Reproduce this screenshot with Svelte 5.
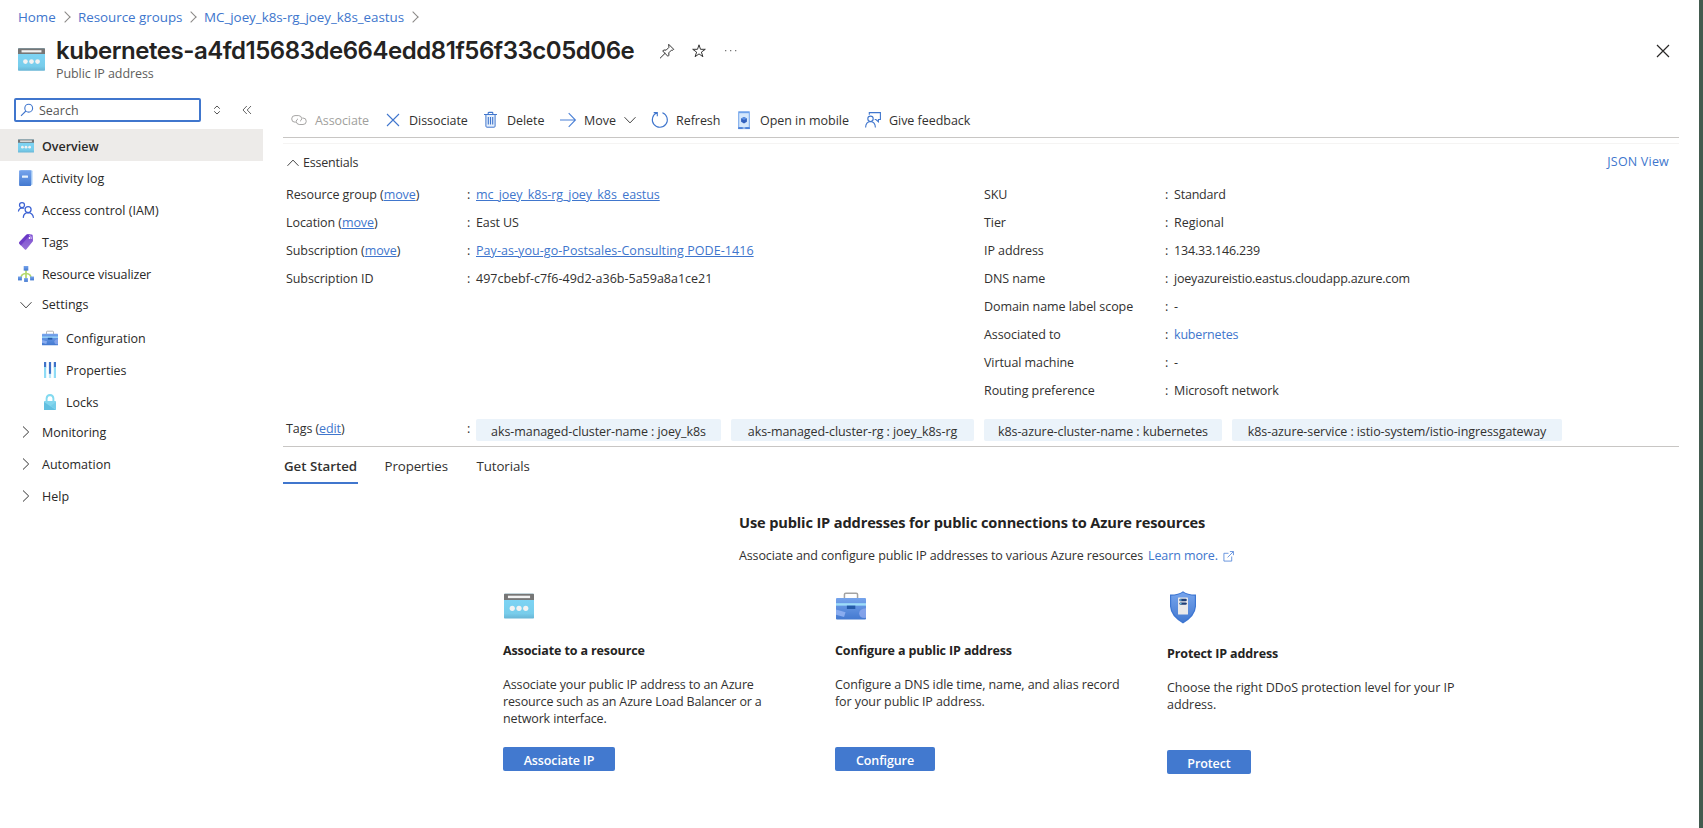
<script>
  const crumbs = [
    { text: 'Home', w: 60 },
    { text: 'Resource groups', w: 126 },
    { text: 'MC_joey_k8s-rg_joey_k8s_eastus', w: 222 },
  ];
  const nav = [
    { icon: 'ip', text: 'Overview', active: true },
    { icon: 'log', text: 'Activity log' },
    { icon: 'iam', text: 'Access control (IAM)' },
    { icon: 'tag', text: 'Tags' },
    { icon: 'visual', text: 'Resource visualizer', ls: -0.13 },
  ];
  const settings = [
    { icon: 'case', text: 'Configuration' },
    { icon: 'props', text: 'Properties' },
    { icon: 'lock', text: 'Locks' },
  ];
  const groups = ['Monitoring', 'Automation', 'Help'];
  const commands = [
    { icon: 'link', text: 'Associate', w: 94, disabled: true },
    { icon: 'x', text: 'Dissociate', w: 98 },
    { icon: 'trash', text: 'Delete', w: 77 },
    { icon: 'arrow', text: 'Move', w: 92, menu: true },
    { icon: 'refresh', text: 'Refresh', w: 84 },
    { icon: 'mobile', text: 'Open in mobile', w: 129 },
    { icon: 'feedback', text: 'Give feedback', w: 120 },
  ];
  const left = [
    { label: 'Resource group', action: 'move', value: 'mc_joey_k8s-rg_joey_k8s_eastus', link: 'u', ls: -0.08 },
    { label: 'Location', action: 'move', value: 'East US', ls: -0.1 },
    { label: 'Subscription', action: 'move', value: 'Pay-as-you-go-Postsales-Consulting PODE-1416', link: 'u', ls: 0.06 },
    { label: 'Subscription ID', value: '497cbebf-c7f6-49d2-a36b-5a59a8a1ce21', ls: 0 },
  ];
  const right = [
    { label: 'SKU', value: 'Standard', ls: -0.2 },
    { label: 'Tier', value: 'Regional', ls: 0 },
    { label: 'IP address', value: '134.33.146.239', ls: -0.18 },
    { label: 'DNS name', value: 'joeyazureistio.eastus.cloudapp.azure.com', ls: -0.2 },
    { label: 'Domain name label scope', value: '-' },
    { label: 'Associated to', value: 'kubernetes', link: 'p', ls: -0.18 },
    { label: 'Virtual machine', value: '-' },
    { label: 'Routing preference', value: 'Microsoft network', ls: -0.1 },
  ];
  const tags = [
    { text: 'aks-managed-cluster-name : joey_k8s', w: 245 },
    { text: 'aks-managed-cluster-rg : joey_k8s-rg', w: 243 },
    { text: 'k8s-azure-cluster-name : kubernetes', w: 238 },
    { text: 'k8s-azure-service : istio-system/istio-ingressgateway', w: 330 },
  ];
  const cards = [
    { icon: 'ip', title: 'Associate to a resource', lines: ['Associate your public IP address to an Azure', 'resource such as an Azure Load Balancer or a', 'network interface.'], button: 'Associate IP', w: 112, ls: -0.14 },
    { icon: 'case', title: 'Configure a public IP address', lines: ['Configure a DNS idle time, name, and alias record', 'for your public IP address.'], button: 'Configure', w: 100, ls: -0.09 },
    { icon: 'shield', title: 'Protect IP address', lines: ['Choose the right DDoS protection level for your IP', 'address.'], button: 'Protect', w: 84, low: true, ls: -0.05 },
  ];
</script>

{#snippet icon(name, size)}
  <svg class="icon" width={size} height={size} viewBox="0 0 16 16" fill="none">
    {#if name === 'ip'}
      <rect x="0" y="1.4" width="16" height="13.2" rx=".4" fill="url(#g-sky)" />
      <path d="M0 1.8q0-.4.4-.4h15.2q.4 0 .4.4v3H0z" fill="#767676" />
      <rect x="2.1" y="2.5" width="11.8" height="1.3" fill="#f2f2f2" />
      <circle cx="4.4" cy="9.2" r="1.4" fill="#f2f2f2" />
      <circle cx="8" cy="9.2" r="1.4" fill="#f2f2f2" />
      <circle cx="11.6" cy="9.2" r="1.4" fill="#f2f2f2" />
    {:else if name === 'log'}
      <path d="M3 .3h10.6q.9 0 .9.9v13q0 .8-.9.8H3z" fill="#a9cdf6" />
      <path d="M2 .3h10.4q.7 0 .7.8v14.1q0 .7-.7.7H2q-.9 0-.9-.9V1.2Q1.1.3 2 .3z" fill="url(#g-blue)" />
      <rect x="4" y="5.6" width="6" height="2.2" rx=".3" fill="#e6f1fd" />
    {:else if name === 'iam'}
      <g stroke="#3d63d3" stroke-width="1.25" stroke-linecap="round">
        <circle cx="4" cy="3.1" r="2.5" />
        <path d="M.5 9Q1 6.2 4 5.8q.9 0 1.7.4" />
        <circle cx="10.1" cy="7.6" r="3" />
        <path d="M5.3 15.4q.3-4.4 4.8-4.7 4.6.3 5.3 4.7" />
      </g>
    {:else if name === 'tag'}
      <path d="M8.300.8Q8.800.3 9.500.3l4.100.2q1 .1 1.100 1l.3 5q0 .7-.5 1.300l-6.300 7.600q-.6.7-1.300.1L1.300 9.700q-.6-.8.1-1.600z" fill="url(#g-purple)" />
      <path d="M8.300.8Q8.800.3 9.500.3l3 .1L2.800 11.400 1.300 9.700q-.6-.8.1-1.600z" fill="#5f2cc0" opacity=".65" />
      <circle cx="11.600" cy="4" r=".9" fill="#fff" />
      <path d="M11.200 1.300q2.700.5 2.300 3.700" stroke="#e3d3fa" stroke-width=".7" />
    {:else if name === 'visual'}
      <path d="M8 4v9M8 7.500q-5 .3-5 4.500M8 7.500q5 .3 5 4.500" stroke="#b3d96c" stroke-width="1.700" />
      <rect x="5.700" y="0" width="4.600" height="4.600" fill="url(#g-blue)" />
      <rect x="0" y="10.500" width="3.900" height="3.900" fill="url(#g-blue)" />
      <rect x="6.100" y="12.100" width="3.800" height="3.800" fill="url(#g-blue)" />
      <rect x="12.100" y="10.500" width="3.900" height="3.900" fill="url(#g-blue)" />
    {:else if name === 'case'}
      <path d="M4.500 4V1.900q0-.7.700-.7h5.600q.7 0 .7.700V4" stroke="#a3a3a3" stroke-width=".8" />
      <rect x="0" y="3.700" width="16" height="11.500" rx=".5" fill="url(#g-blue)" />
      <path d="M0 9.900 5.100 11.300 4.300 13.900 0 12.700z" fill="#8fb0f2" opacity=".9" />
      <path d="M16 9.200v5.100q-3.600.4-3.700-2.500.2-2.400 3.700-2.600z" fill="#8fa9ee" opacity=".8" />
      <rect x="0" y="6.500" width="16" height="1.300" fill="#9ddcf9" />
      <rect x="5.800" y="7.800" width="4.500" height="1.800" fill="#245aa8" />
    {:else if name === 'props'}
      <rect x="2" y="0" width="2.200" height="5.500" fill="#3f72c8" /><rect x="2" y="5" width="2.200" height="11" fill="#8fdcf6" />
      <rect x="6.900" y="0" width="2.200" height="12" fill="#3f72c8" /><rect x="6.900" y="11.800" width="2.200" height="4.200" fill="#b9e8f9" />
      <rect x="11.800" y="0" width="2.200" height="5.500" fill="#3f72c8" /><rect x="11.800" y="5" width="2.200" height="11" fill="#8fdcf6" />
    {:else if name === 'lock'}
      <path d="M4.600 7.500V4.400Q4.800 1.100 8 1q3.200.1 3.400 3.400v3.100" stroke="#83daf0" stroke-width="1.900" />
      <rect x="2" y="7" width="12" height="8.900" rx=".6" fill="#83d6ee" />
      <path d="M2 8l12 8H2.600q-.6 0-.6-.6z" fill="#62bfe0" />
      <path d="M14 8v7.300L8.500 12z" fill="#74cce9" />
    {:else if name === 'link'}
      <g stroke="#a6a5a4" stroke-width="1">
        <path d="M4.800 10.200H4A3.300 3.300 0 0 1 4 3.600h3.800q2.700.3 2.900 3-.1 1.700-1.700 2.700" />
        <path d="M11.300 6H12a3.200 3.200 0 0 1 0 6.500H8.200Q5.300 12.100 5.200 9.500 5.400 7.700 7 6.800" />
      </g>
    {:else if name === 'x'}
      <path d="M2 2l12 12M14 2L2 14" stroke="#4076cd" stroke-width="1.100" />
    {:else if name === 'trash'}
      <path d="M2.900 3v11.200q0 1 1 1h7.200q1 0 1-1V3" fill="#e6f0fc" stroke="#4076cd" />
      <path d="M1 2.500h13M5.200 2.400V1q0-.6.6-.6h3.400q.6 0 .6.600v1.400M5.300 5v7.500M7.500 5v7.500M9.700 5v7.500" stroke="#4076cd" stroke-width="1.100" />
    {:else if name === 'arrow'}
      <path d="M0 8h15.300M8.700 1.200l6.700 6.800-6.700 6.800" stroke="#4b80d6" stroke-width="1.100" />
    {:else if name === 'refresh'}
      <path d="M10.400.7A7.500 7.500 0 1 1 5 .8M1.700.6H5.300V4.300" stroke="#4076cd" stroke-width="1.100" />
    {:else if name === 'mobile'}
      <rect x="2.200" y="-.8" width="11.600" height="17.900" rx=".5" fill="#6fa2ea" />
      <rect x="3.200" y="1.200" width="9.600" height="13.800" fill="#d5e8fc" />
      <path d="M8 5l2.900 1.500v3.300L8 11.400 5.100 9.800V6.500z" fill="#3160bd" />
      <path d="M8 5l2.900 1.500L8 8 5.100 6.500z" fill="#5d92e4" />
      <path d="M2.200 15.200h11.600v1.900H2.200z" fill="#4d82d8" />
      <path d="M6.700 16h2.600" stroke="#d5e8fc" />
    {:else if name === 'feedback'}
      <g stroke="#4076cd" stroke-width="1.100">
        <circle cx="5.500" cy="6.800" r="2.700" />
        <path d="M.6 15.500q.2-5.700 4.900-6 4.700.3 4.900 6" />
        <path d="M4.300 2.800V.6h11.100v6.900h-2v2.300l-2.500-2.300H9.700" />
      </g>
    {:else if name === 'shield'}
      <path d="M8 .1q2 1.700 6.500 1.700v6q-.3 5-6.500 8.400Q1.800 12.800 1.500 7.800v-6Q6 1.800 8 .1z" fill="#3d76d2" />
      <path d="M8 .8q2.200 1.500 5.900 1.600v5.400Q13.500 12 8 15.500 2.500 12 2.100 7.800V2.400Q5.800 2.300 8 .8z" fill="url(#g-blue)" />
      <rect x="5.500" y="3.300" width="5" height="8.500" rx=".3" fill="#e9e9ea" />
      <rect x="6.200" y="3.900" width="3.700" height="1.200" rx=".6" fill="#1f3f78" />
      <rect x="6.200" y="5.700" width="3.700" height="1.200" rx=".6" fill="#1f3f78" />
      <circle cx="6.900" cy="4.500" r=".4" fill="#6fd0ee" /><circle cx="6.900" cy="6.300" r=".4" fill="#6fd0ee" />
    {/if}
  </svg>
{/snippet}

{#snippet chevron(dir, size, color)}
  <svg class="icon" width={size} height={size} viewBox="0 0 12 12" fill="none" stroke={color}>
    {#if dir === 'right'}<path d="M3 0.500l5.700 5.500L3 11.500" />
    {:else if dir === 'down'}<path d="M.5 3.200L6 8.900l5.500-5.700" />
    {:else}<path d="M.5 8.800L6 3.100l5.500 5.700" />{/if}
  </svg>
{/snippet}

{#snippet field(f)}
  <div class="field">
    <span class="label">{f.label}{#if f.action}{' ('}<a class="under">{f.action}</a>){/if}</span>
    <span class="colon">:</span>
    {#if f.link}<a class:under={f.link === 'u'} style="letter-spacing:{f.ls}px">{f.value}</a>{:else}<span style="letter-spacing:{f.ls ?? 0}px">{f.value}</span>{/if}
  </div>
{/snippet}

<svg class="defs" width="0" height="0">
  <linearGradient id="g-sky" x1="0" y1="0" x2="0" y2="1"><stop offset=".2" stop-color="#7dd4f5" /><stop offset=".8" stop-color="#78cdeb" /><stop offset="1" stop-color="#68b5d5" /></linearGradient>
  <linearGradient id="g-blue" x1="0" y1="0" x2="0" y2="1"><stop stop-color="#76a4ec" /><stop offset="1" stop-color="#4379d0" /></linearGradient>
  <linearGradient id="g-purple" x1="0" y1="0" x2="0" y2="1"><stop stop-color="#7c4cd2" /><stop offset="1" stop-color="#9773d5" /></linearGradient>
</svg>

<div class="app">
  <div class="blade">
    <nav class="crumbs">
      {#each crumbs as c}
        <span class="crumb" style="width:{c.w}px"><a>{c.text}</a></span>
      {/each}
    </nav>
    <header>
      <div class="logo">{@render icon('ip', 27)}</div>
      <div class="titles">
        <div class="titlerow">
          <h1>kubernetes-a4fd15683de664edd81f56f33c05d06e</h1>
          <svg width="16" height="16" viewBox="0 0 16 16" fill="none" stroke="#333">
            <path d="M9.700 1.300l5 5-.9.900-1.300-.1-2.700 2.700.1 2.500-1 1L3.700 8l1-1 2.500.1 2.700-2.700-.1-1.300zM6.200 10.200L1 15.300" />
          </svg>
          <svg width="16" height="16" viewBox="0 0 16 16" fill="none" stroke="#333">
            <path d="M8 1.800l1.500 4.500h4.800l-3.900 2.800 1.500 4.600L8 10.900l-3.900 2.800 1.500-4.600-3.900-2.800h4.800z" />
          </svg>
          <svg width="16" height="16" viewBox="0 0 16 16" fill="#777"><path d="M2 7h1.300v1.300H2zM7 7h1.300v1.300H7zM12 7h1.300v1.300H12z" /></svg>
        </div>
        <div class="sub">Public IP address</div>
      </div>
      <svg class="close" width="14" height="14" viewBox="0 0 14 14" stroke="#292827" stroke-width="1.200"><path d="M1 1l12 12M13 1L1 13" /></svg>
    </header>

    <div class="body">
      <aside>
        <div class="searchrow">
          <div class="search">
            <svg width="14" height="14" viewBox="0 0 14 14" fill="none" stroke="#4076cd" stroke-width="1.100"><circle cx="8.700" cy="5.200" r="3.900" /><path d="M5.900 8L1 12.900" /></svg>
            <span>Search</span>
          </div>
          <svg width="8" height="10" viewBox="0 0 8 10" fill="none" stroke="#555"><path d="M1.200 3.700L4 1l2.800 2.700M1.200 6.300L4 9l2.800-2.700" /></svg>
          <svg class="collapse" width="10" height="10" viewBox="0 0 10 10" fill="none" stroke="#666"><path d="M4.800 1L1 5l3.800 4M9 1L5.200 5 9 9" /></svg>
        </div>
        {#each nav as n}
          <div class="item" class:active={n.active}>{@render icon(n.icon, 16)}<span style="letter-spacing:{n.ls ?? 0}px">{n.text}</span></div>
        {/each}
        <div class="item open">{@render chevron('down', 12, '#444')}<span>Settings</span></div>
        <div class="children">
          {#each settings as n}
            <div class="item">{@render icon(n.icon, 16)}<span>{n.text}</span></div>
          {/each}
        </div>
        {#each groups as g}
          <div class="item group">{@render chevron('right', 12, '#333')}<span>{g}</span></div>
        {/each}
      </aside>

      <main>
        <div class="toolbar">
          {#each commands as c}
            <div class="command" class:disabled={c.disabled} style="width:{c.w}px">
              {@render icon(c.icon, 16)}<span>{c.text}</span>
              {#if c.menu}{@render chevron('down', 12, '#444')}{/if}
            </div>
          {/each}
        </div>
        <section class="essentials">
          <div class="esshead">
            {@render chevron('up', 12, '#444')}<span>Essentials</span><a>JSON View</a>
          </div>
          <div class="columns">
            <div>{#each left as f}{@render field(f)}{/each}</div>
            <div>{#each right as f}{@render field(f)}{/each}</div>
          </div>
          <div class="tagrow">
            <span class="label">Tags (<a class="under">edit</a>)</span>
            <span class="colon">:</span>
            <div class="chips">
              {#each tags as t}<span class="chip" style="width:{t.w}px">{t.text}</span>{/each}
            </div>
          </div>
        </section>
        <div class="tabs">
          <span class="tab on">Get Started</span>
          <span class="tab two">Properties</span>
          <span class="tab">Tutorials</span>
        </div>
        <section class="intro">
          <h2>Use public IP addresses for public connections to Azure resources</h2>
          <p><span class="lead">Associate and configure public IP addresses to various Azure resources</span><a>Learn more.</a>
            <svg width="11" height="11" viewBox="0 0 12 12" fill="none" stroke="#4f83d8" stroke-width=".9"><path d="M6 2.500H1v8.500h8.500V6M7.500.6h3.900v3.900M11.300.7L5 7" /></svg>
          </p>
        </section>
        <section class="cards">
          {#each cards as c}
            <div class="card" class:low={c.low}>
              <div class="pic">{@render icon(c.icon, c.low ? 32 : 30)}</div>
              <h3>{c.title}</h3>
              <div class="text" style="letter-spacing:{c.ls}px">{#each c.lines as l}<div>{l}</div>{/each}</div>
              <button style="width:{c.w}px">{c.button}</button>
            </div>
          {/each}
        </section>
      </main>
    </div>
  </div>
  <div class="edge"></div>
</div>

<style>
  :global(body) { margin: 0; background: #fff; overflow: hidden; }
  .app { display: flex; width: 1703px; height: 828px; font-family: "Open Sans", "Noto Sans", sans-serif; font-size: 12.5px; color: #323130; line-height: 18px; white-space: nowrap; overflow: hidden; }
  .blade { width: 1699px; }
  .edge { width: 4px; background: #435b4f; }
  .defs { position: absolute; }
  .icon { flex: none; overflow: visible; }
  a { color: #4076cd; }
  .under { text-decoration: underline; text-underline-offset: 1px; }
  h1, h2, h3, p { margin: 0; }

  .crumbs { display: flex; height: 34px; padding-left: 18px; align-items: center; font-size: 13.4px; letter-spacing: -0.03px; }
  .crumb { display: flex; align-items: center; justify-content: space-between; }
  .crumb::after { content: ""; width: 7px; height: 7px; border: solid #8a8886; border-width: 1px 1px 0 0; transform: rotate(45deg); margin-right: 9px; }

  header { display: flex; height: 64px; padding-left: 18px; }
  .logo { width: 38px; padding-top: 12px; }
  .titles { flex: 1; }
  .titlerow { display: flex; align-items: center; height: 34px; }
  .titlerow svg { margin-right: 16px; }
  h1 { font-family: Inter, sans-serif; font-size: 24px; font-weight: 600; color: #242322; width: 603px; line-height: 34px; letter-spacing: -0.46px; }
  .sub { color: #605e5c; line-height: 12px; letter-spacing: -0.07px; }
  .close { margin: 10px 29px 0 0; }

  .body { display: flex; }
  aside { width: 263px; }
  .searchrow { display: flex; align-items: center; height: 24px; padding-left: 14px; margin-bottom: 7px; }
  .search { box-sizing: border-box; width: 187px; height: 24px; border: 2px solid #4076cd; border-radius: 2px; display: flex; align-items: center; gap: 5px; padding-left: 4px; margin-right: 12px; color: #555; }
  .search span { padding-top: 2px; }
  .collapse { margin-left: 21px; }
  .item { box-sizing: border-box; display: flex; align-items: center; height: 32px; padding: 2px 0 0 18px; gap: 8px; color: #292827; }
  .item span { padding-top: 2px; }
  .active { background: #edebe9; font-weight: 600; letter-spacing: -0.1px; }
  .open, .group { padding-left: 20px; gap: 10px; }
  .open { margin-top: -1.5px; }
  .item.open span { padding-top: 0; }
  .children { padding: 1.5px 0 0 24px; margin-bottom: -2px; }

  main { padding: 5px 0 0 20px; width: 1396px; }
  .toolbar { display: flex; height: 34px; padding-left: 8px; border-bottom: 1px solid #c8c6c4; align-items: center; }
  .command { display: flex; align-items: center; gap: 8px; letter-spacing: -0.04px; }
  .command span { padding-top: 2px; }
  .disabled { color: #a19f9d; letter-spacing: -0.1px; }
  .essentials { margin-top: 5px; border-top: 1px solid #f5f4f3; border-bottom: 1px solid #c8c6c4; height: 302px; }
  .esshead { display: flex; align-items: center; height: 37px; padding: 0 10px 0 4px; gap: 4px; }
  .esshead span { padding-top: 1px; letter-spacing: -0.2px; }
  .esshead a { margin-left: auto; letter-spacing: 0.2px; margin-top: -1px; }
  .columns { display: grid; grid-template-columns: 698px 1fr; padding-left: 3px; height: 238px; }
  .field { display: flex; align-items: center; height: 28px; }
  .label { width: 181px; letter-spacing: -0.08px; }
  .colon { width: 9px; }
  .tagrow { display: flex; padding-left: 3px; line-height: 20px; }
  .chips { display: flex; gap: 10px; letter-spacing: -0.08px; }
  .chip { height: 22px; line-height: 25px; background: #ebf3fa; border-radius: 2px; text-align: center; }

  .tabs { display: flex; height: 37px; font-size: 13.3px; letter-spacing: -0.1px; }
  .tab { box-sizing: border-box; line-height: 38px; }
  .on { width: 75px; text-align: center; font-weight: 600; border-bottom: 2px solid #4076cd; margin-right: 26.5px; letter-spacing: 0; }
  .two { width: 92px; }
  .intro { padding: 27px 0 0 456px; }
  h2 { font-size: 14.6px; line-height: 22px; font-weight: 700; color: #242322; letter-spacing: -0.14px; }
  p { display: flex; align-items: center; height: 18px; margin-top: 14px; }
  .lead { width: 409px; letter-spacing: -0.12px; }
  p a { letter-spacing: -0.1px; }
  p svg { margin-left: 5px; }
  .cards { display: grid; grid-template-columns: repeat(3, 332px); padding: 26px 0 0 220px; }
  .pic { height: 31px; padding-left: 1px; }
  h3 { font-size: 12.5px; line-height: 18px; font-weight: 700; color: #242322; margin-top: 20px; letter-spacing: -0.12px; }
  .text { line-height: 17px; height: 51px; margin: 16px 0 20px; }
  button { display: block; height: 24px; border: 0; border-radius: 2px; background: #4279cf; color: #fff; font: 600 12.5px/24px "Open Sans", sans-serif; letter-spacing: -0.1px; padding: 2px 0 0; }
  .low .pic { height: 34px; padding-left: 0; }
</style>
